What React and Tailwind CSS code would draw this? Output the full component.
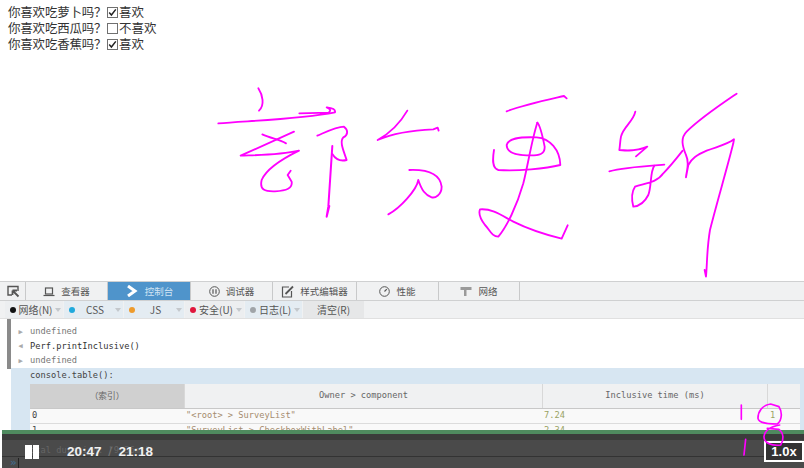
const cjk = { fontFamily: '"Noto Sans CJK SC","Liberation Sans",sans-serif' };
const mono = { fontFamily: '"DejaVu Sans Mono",monospace' };

function Check({ on }) {
  return (
    <span className="inline-flex w-[11px] h-[11px] border border-[#707070] bg-white mx-[1px] items-center justify-center shrink-0">
      {on && (
        <svg width="9" height="9" viewBox="0 0 9 9">
          <path d="M1.2 4.6 L3.4 7 L7.8 1.4" fill="none" stroke="#222" strokeWidth="1.5" />
        </svg>
      )}
    </span>
  );
}

function Question({ q, on, label }) {
  return (
    <div className="flex items-center h-4 whitespace-nowrap">
      <span className="w-[98px] tracking-[-0.2px] shrink-0">{q}</span>
      <Check on={on} />
      <span>{label}</span>
    </div>
  );
}

function Tab({ w, active, icon, label }) {
  return (
    <div
      className={`flex items-center justify-center gap-[6px] h-full border-r border-[#c8c9ca] ${active ? 'bg-[#4f94cb] text-[#cfe3f3]' : 'text-[#555]'}`}
      style={{ width: w }}
    >
      {icon}
      <span>{label}</span>
    </div>
  );
}

const I = {
  inspect: (
    <svg width="14" height="14" viewBox="0 0 14 14" fill="none" stroke="#555" strokeWidth="1.4">
      <path d="M6 11H2V2.5H12V7" />
      <path d="M6.5 6.5 L12.5 12.5 M6.5 6.5 V11 M6.5 6.5 H11" strokeWidth="1.8" />
    </svg>
  ),
  inspector: (
    <svg width="12" height="12" viewBox="0 0 12 12" fill="none" stroke="#555" strokeWidth="1.2">
      <rect x="2.5" y="3" width="7" height="6" />
      <path d="M0.5 10.5H11.5" />
    </svg>
  ),
  console: (
    <svg width="14" height="12" viewBox="0 0 14 12" fill="none" stroke="#fff" strokeWidth="3">
      <path d="M3 1 L10 6 L3 11" />
    </svg>
  ),
  debug: (
    <svg width="11" height="11" viewBox="0 0 11 11" fill="none" stroke="#555" strokeWidth="1">
      <circle cx="5.5" cy="5.5" r="4.8" />
      <path d="M4 3.2V7.8M7 3.2V7.8" strokeWidth="1.2" />
    </svg>
  ),
  style: (
    <svg width="13" height="13" viewBox="0 0 13 13" fill="none" stroke="#555" strokeWidth="1.2">
      <path d="M8 2H1.5V12H10.5V6" />
      <path d="M4.5 9 L12 1.5" strokeWidth="1.8" />
    </svg>
  ),
  perf: (
    <svg width="11" height="11" viewBox="0 0 11 11" fill="none" stroke="#555" strokeWidth="1">
      <circle cx="5.5" cy="5.5" r="4.8" />
      <path d="M5.5 5.5 L7.8 3.2" strokeWidth="1.2" />
    </svg>
  ),
  net: (
    <svg width="12" height="11" viewBox="0 0 12 11" fill="#9a9a9a">
      <path d="M0.5 1H11.5V4H6.5V10H4V4H0.5Z" />
    </svg>
  ),
};

function Filter({ w, dot, label, on }) {
  return (
    <div
      className={`flex items-center h-full shrink-0 border-r border-[#f0f1f2] ${on ? 'bg-[#e4ecf2]' : 'bg-[#eceef0]'}`}
      style={{ width: w }}
    >
      <span className="w-[6px] h-[6px] rounded-full ml-[5px] shrink-0" style={{ background: dot }} />
      <span className="flex-1 text-center text-[#555] text-[10px]">{label}</span>
      <svg width="6" height="4" viewBox="0 0 6 4" className="mr-[2px] shrink-0"><path d="M0 0H6L3 4Z" fill="#c4c8cc" /></svg>
    </div>
  );
}

function Row({ mark, children, color = '#555' }) {
  return (
    <div className="flex items-center h-[14.5px] shrink-0">
      <span className="w-[19px] text-center text-[7px] text-[#aaa] shrink-0">{mark}</span>
      <span style={{ color }}>{children}</span>
    </div>
  );
}

function Cells({ a, b, c, d, h }) {
  return (
    <div className="flex items-center border-b border-[#dcdcdc] bg-[#f9f9f9] shrink-0" style={{ height: h }}>
      <div className="w-[154px] pl-[2px] text-[#444]">{a}</div>
      <div className="w-[358px] pl-[2px] text-[#a58c6e]">{b}</div>
      <div className="w-[225px] pl-[2px] text-[#9aa262]">{c}</div>
      <div className="w-[32px] pl-[3px] text-[#9aa262]">{d}</div>
    </div>
  );
}

function Drawing() {
  const s = { fill: 'none', stroke: '#f0f', strokeLinecap: 'round', strokeLinejoin: 'round' };
  return (
    <svg className="absolute left-0 top-0 pointer-events-none" width="804" height="468" viewBox="0 0 804 468">
      <g {...s} strokeWidth="5.5" transform="translate(200 80) scale(.3333)">
        <path d="M175 25 C188 45 195 75 177 92" />
        <path d="M55 130 C150 122 300 118 405 97 Q408 85 380 82 Q398 90 385 98 L298 100" />
        <path d="M187 163 C215 175 240 180 258 190" />
        <path d="M282 155 L122 227 C180 225 240 225 297 212 C250 235 200 265 185 300 C178 330 195 335 225 334 C260 332 278 325 275 305 L263 285 L272 272" />
        <path d="M352 167 C380 155 410 140 432 140 C445 150 445 165 430 172 C418 185 430 210 440 240 C420 245 405 235 397 222" />
        <path d="M397 198 L385 380 L380 410 L388 378" strokeWidth="6" />
        <path d="M622 92 C600 130 570 160 533 180 C590 155 650 150 700 148 L713 143 L716 152" />
        <path d="M628 270 C680 268 720 280 725 320 C725 345 705 355 695 352 C675 345 665 330 655 300 C650 330 600 385 565 403" />
      </g>
      <g {...s} strokeWidth="5.5" transform="translate(460 80) scale(.3333)">
        <path d="M140 94 C190 75 260 60 312 48 L320 55" />
        <path d="M232 128 C215 180 205 250 190 310 C170 380 140 440 115 470 C95 470 90 450 75 435 C60 415 55 400 60 388 C100 385 130 410 160 425 C200 445 260 465 305 476 L323 436" />
        <path d="M232 128 C240 135 248 170 254 200 C255 222 240 228 200 226 C165 225 140 215 140 195 C145 175 175 170 230 172 C270 175 300 210 301 255 C260 265 170 275 115 270 C95 265 98 235 102 210" />
        <path d="M526 95 C520 125 490 140 483 170 C480 185 480 200 478 210 C500 212 530 215 562 200 L528 229" />
        <path d="M448 274 C490 262 560 258 613 254" />
        <path d="M583 257 C570 275 575 320 565 345 C555 365 540 378 520 380 C515 360 515 335 525 320 C550 310 590 310 610 280 C630 260 650 235 668 212" />
        <path d="M830 41 C780 75 720 115 680 155 C660 175 668 200 678 225 C690 250 680 270 678 292 L685 255 C695 235 710 225 740 212 C770 200 800 195 822 178 L820 190 C800 270 770 370 750 450 C740 510 742 550 738 590 L734 570" />
      </g>
      <g {...s} strokeWidth="5" transform="translate(534 370) scale(.3333)">
        <path d="M622 105 L622 148" />
        <path d="M710 102 C685 105 672 125 672 145 C675 160 700 162 730 162 C745 150 745 125 735 110 L710 102" />
        <path d="M737 165 C710 170 692 180 690 200 C690 220 715 228 740 225 C750 210 750 190 735 178 L700 175" />
        <path d="M635 208 L630 255" />
      </g>
    </svg>
  );
}

export default function App() {
  return (
    <div className="relative w-[804px] h-[468px] overflow-hidden bg-white" style={cjk}>
      <div className="h-[281px] pl-2 pt-[4px] text-[12.5px] text-[#333]">
        <Question q="你喜欢吃萝卜吗？" on label="喜欢" />
        <Question q="你喜欢吃西瓜吗？" label="不喜欢" />
        <Question q="你喜欢吃香蕉吗？" on label="喜欢" />
      </div>

      <div className="flex items-stretch h-5 bg-[#f0f1f2] border-y border-[#cfd0d1] text-[9.5px]">
        <div className="w-[26px] flex items-center justify-center border-r border-[#c8c9ca]">{I.inspect}</div>
        <Tab w={82} icon={I.inspector} label="查看器" />
        <Tab w={83} active icon={I.console} label="控制台" />
        <Tab w={82} icon={I.debug} label="调试器" />
        <Tab w={84} icon={I.style} label="样式编辑器" />
        <Tab w={82} icon={I.perf} label="性能" />
        <Tab w={81} icon={I.net} label="网络" />
      </div>

      <div className="flex items-center h-[18px] pl-[5px] bg-[#f0f1f2] border-b border-[#e0e0e0]">
        <Filter w={59} dot="#111" label="网络(N)" />
        <Filter w={60} dot="#1fa9dc" label="CSS" on />
        <Filter w={61} dot="#ee9b2c" label="JS" on />
        <Filter w={60} dot="#e0163c" label="安全(U)" />
        <Filter w={58} dot="#a0a4a8" label="日志(L)" on />
        <div className="w-[61px] h-full flex items-center justify-center bg-[#e6e7e8] text-[10px] text-[#555]">清空(R)</div>
      </div>

      <div className="relative flex h-[149px] pl-[7px] text-[8.7px]" style={mono}>
        <div className="w-1 h-[50px] bg-[#8a8a8a] shrink-0" />
        <div className="flex-1 flex flex-col pt-[5.5px] -ml-1 pl-1 overflow-hidden">
          <Row mark="▶" color="#777">undefined</Row>
          <Row mark="◀" color="#333">Perf.printInclusive()</Row>
          <Row mark="▶" color="#777">undefined</Row>
          <div className="flex-1 bg-[#d7e6f2]">
            <div className="h-[16px] pl-[19px] flex items-center text-[#444]">console.table():</div>
            <div className="ml-[19px] mr-1">
              <div className="flex h-[25px] bg-[#f0f1f2] border-b border-[#c8c8c8] text-[#666]">
                <div className="w-[154px] bg-[#d0d0d0] flex items-center justify-center" style={cjk}>（索引）</div>
                <div className="w-[358px] flex items-center justify-center border-l border-[#d8d8d8]">Owner &gt; component</div>
                <div className="w-[225px] flex items-center justify-center border-l border-[#d8d8d8]">Inclusive time (ms)</div>
                <div className="w-[32px] border-l border-[#d8d8d8]" />
              </div>
              <Cells a="0" b={'"<root> > SurveyList"'} c="7.24" d="1" h={15} />
              <Cells a="1" b={'"SurveyList > CheckboxWithLabel"'} c="2.34" d="" h={15} />
            </div>
          </div>
        </div>
      </div>

      <div className="absolute left-[2px] right-0 bottom-0 h-[38px] bg-[#4a4a4a]">
        <div className="h-[4px] bg-[#4f8a5f]" />
        <div className="h-[6px] bg-[#3b3b3b]" />
        <div className="relative h-[16px]">
          <div className="absolute left-[28px] top-[4px] text-[8.7px] text-[#666]" style={mono}>otal duration: "9.36ms"</div>
        </div>
        <div className="h-px bg-[#333]" />
        <div className="flex items-center h-[11px] text-[#3f6f94] text-[11px] leading-none pl-2" style={mono}>
          »<span className="ml-[1px] w-px h-[10px] bg-[#222]" />
        </div>
        <div className="absolute left-[23px] top-[15px] flex gap-[1px]">
          <span className="w-[7px] h-[14px] bg-white" />
          <span className="w-[6px] h-[14px] bg-white" />
        </div>
        <div className="absolute left-[65px] top-[14px] flex items-center h-4 text-[13.5px] font-bold text-[#f0f0f0]" style={{ fontFamily: '"Liberation Sans",sans-serif' }}>
          <span>20:47</span>
          <span className="w-[17px] text-center font-normal text-[#777]">/</span>
          <span>21:18</span>
        </div>
        <div className="absolute right-0 top-[11px] w-10 h-[21px] flex items-center justify-center border-2 border-white bg-[#333] text-white text-[13px] font-bold" style={{ fontFamily: '"Liberation Sans",sans-serif' }}>1.0x</div>
      </div>

      <Drawing />
    </div>
  );
}
